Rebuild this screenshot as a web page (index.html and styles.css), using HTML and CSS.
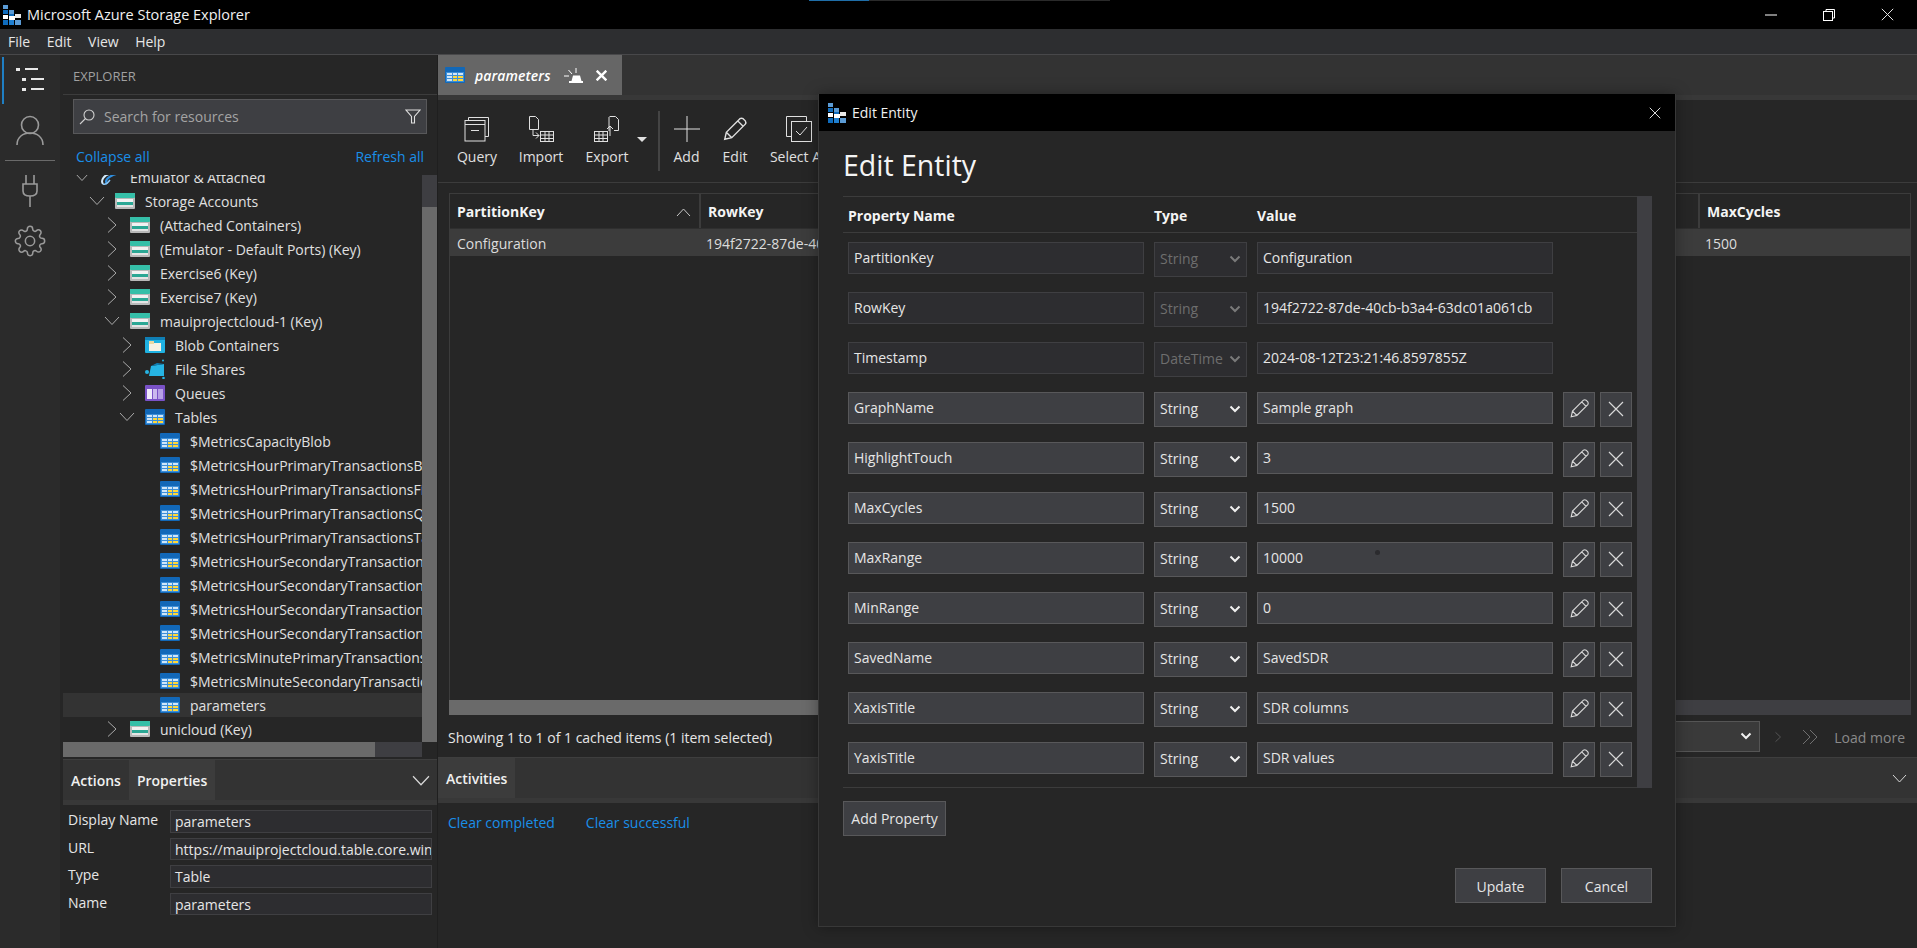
FILE: index.html
```html
<!DOCTYPE html>
<html lang="en">
<head>
    <meta charset="UTF-8">
    <title>Microsoft Azure Storage Explorer</title>
    <link rel="stylesheet" href="styles.css">
</head>
<body>

<!-- shared icons -->
<svg class="defs" width="0" height="0">
    <symbol id="logo" viewBox="0 0 18 20">
        <rect x="0" y="0" width="5" height="4" fill="#5b9bd5"/>
        <rect x="0" y="5" width="5" height="4" fill="#0f6cbd"/>
        <rect x="6" y="5" width="5" height="4" fill="#5b9bd5"/>
        <rect x="12" y="9" width="6" height="4" fill="#e8e8e8"/>
        <rect x="6" y="9" width="5" height="4" fill="#0f6cbd"/>
        <rect x="0" y="10" width="5" height="4" fill="#ffffff"/>
        <rect x="6" y="11" width="6" height="4" fill="#ffffff"/>
        <rect x="0" y="15" width="5" height="5" fill="#0f6cbd"/>
        <rect x="6" y="15" width="5" height="5" fill="#1f7fd0"/>
        <rect x="12" y="15" width="6" height="5" fill="#5b9bd5"/>
    </symbol>
    <symbol id="tbl" viewBox="0 0 20 16">
        <rect width="20" height="16" rx="1" fill="#1268b8"/>
        <rect x="1" y="5" width="18" height="10" fill="#3d8fd8"/>
        <rect x="2" y="6" width="5" height="2" fill="#cfe6f9"/>
        <rect x="8" y="6" width="4" height="2" fill="#cfe6f9"/>
        <rect x="13" y="6" width="5" height="2" fill="#cfe6f9"/>
        <rect x="2" y="9" width="5" height="2" fill="#cfe6f9"/>
        <rect x="8" y="9" width="4" height="2" fill="#ffd83a"/>
        <rect x="13" y="9" width="5" height="2" fill="#ffd83a"/>
        <rect x="2" y="12" width="5" height="2" fill="#cfe6f9"/>
        <rect x="8" y="12" width="4" height="2" fill="#ffd83a"/>
        <rect x="13" y="12" width="5" height="2" fill="#ffd83a"/>
    </symbol>
    <symbol id="acct" viewBox="0 0 20 16">
        <rect width="20" height="16" rx="1" fill="#b9b9b9"/>
        <rect width="20" height="5" rx="1" fill="#35bfa8"/>
        <rect x="2" y="6" width="16" height="3" fill="#f2f2f2"/>
        <rect x="2" y="9" width="16" height="3" fill="#2ba794"/>
        <rect x="2" y="12" width="16" height="2" fill="#e4e4e4"/>
    </symbol>
    <symbol id="blob" viewBox="0 0 20 16">
        <rect width="20" height="16" rx="1" fill="#1fb2e2"/>
        <rect width="20" height="3" fill="#0f7fb5"/>
        <rect x="4" y="6" width="12" height="8" fill="#f6f2e4"/>
        <rect x="4" y="4" width="5" height="3" fill="#e9d9a4"/>
    </symbol>
    <symbol id="share" viewBox="0 0 20 20">
        <path d="M6 7 L19 5 V17 H4z" fill="#26b4e4"/>
        <path d="M6 7 L12 4 L19 5z" fill="#0f7fb5"/>
        <circle cx="2" cy="13" r="2" fill="#26b4e4"/>
        <circle cx="18" cy="1.500" r="1" fill="#26b4e4"/>
        <circle cx="18.500" cy="19" r="1.300" fill="#26b4e4"/>
    </symbol>
    <symbol id="queue" viewBox="0 0 20 16">
        <rect width="20" height="16" rx="1" fill="#7a52c7"/>
        <rect x="2" y="4" width="5" height="10" fill="#efe9fb"/>
        <rect x="8" y="4" width="4" height="10" fill="#cbb9ee"/>
        <rect x="13" y="4" width="5" height="10" fill="#b7a0e6"/>
    </symbol>
    <symbol id="clip" viewBox="0 0 20 16">
        <path d="M3 15 C0 11 5 6 9 5 L18 1" fill="none" stroke="#d5ebfc" stroke-width="2"/>
        <path d="M7 15 C4 11 9 8 13 6 L19 4" fill="none" stroke="#2f8fe0" stroke-width="2.200"/>
        <path d="M3 15 C5 16 7 15 10 11" fill="none" stroke="#8cc6f3" stroke-width="1.500"/>
    </symbol>
    <symbol id="chev-r" viewBox="0 0 16 16">
        <path d="M4 0.500 L12 8 L4 15.500" fill="none" stroke="currentColor"/>
    </symbol>
    <symbol id="chev-d" viewBox="0 0 16 16">
        <path d="M1 4 L8 11.500 L15 4" fill="none" stroke="currentColor"/>
    </symbol>
    <symbol id="chev-wide" viewBox="0 0 15 9">
        <path d="M1 1 L7.500 8 L14 1" fill="none" stroke="currentColor"/>
    </symbol>
    <symbol id="pencil" viewBox="0 0 24 24">
        <path d="M2.500 21.500 L4 15 L16.500 2.500 Q18 1.500 19.500 2.500 L21.500 4.500 Q22.500 6 21.500 7.500 L9 20z M4 15 L9 20 M14.500 4.500 L19.500 9.500" fill="none" stroke="currentColor" stroke-width="1.300"/>
    </symbol>
    <symbol id="cross" viewBox="0 0 16 16">
        <path d="M1 1 L15 15 M15 1 L1 15" fill="none" stroke="currentColor" stroke-width="1.200"/>
    </symbol>
    <symbol id="caret" viewBox="0 0 12 8">
        <path d="M1.500 1.500 L6 6 L10.500 1.500" fill="none" stroke="currentColor" stroke-width="2"/>
    </symbol>
</svg>

<header class="titlebar">
    <svg class="app-logo"><use href="#logo"/></svg>
    <span class="app-title">Microsoft Azure Storage Explorer</span>
    <div class="progress"><div class="progress-fill"></div></div>
    <div class="win-btns">
        <span class="win-btn"><svg width="12" height="12" viewBox="0 0 12 12"><path d="M0 6 H12" stroke="#fff"/></svg></span>
        <span class="win-btn"><svg width="12" height="12" viewBox="0 0 12 12"><rect x="0.500" y="2.500" width="9" height="9" fill="none" stroke="#fff"/><path d="M3 2.500 V0.500 H11.500 V9 H9.500" fill="none" stroke="#fff"/></svg></span>
        <span class="win-btn"><svg width="13" height="13"><use href="#cross"/></svg></span>
    </div>
</header>

<nav class="menubar">
    <span>File</span>
    <span>Edit</span>
    <span>View</span>
    <span>Help</span>
</nav>

<div class="workspace">
    <aside class="rail">
        <div class="rail-item active">
            <svg width="28" height="26" viewBox="0 0 28 26" fill="#e8e8e8">
                <rect x="0" y="1" width="4" height="3"/><rect x="9" y="1" width="13" height="2"/>
                <rect x="6" y="11" width="4" height="3"/><rect x="15" y="11" width="13" height="2"/>
                <rect x="6" y="21" width="4" height="3"/><rect x="15" y="21" width="13" height="2"/>
            </svg>
        </div>
        <div class="rail-item person">
            <svg width="28" height="31" viewBox="0 0 28 31" fill="none" stroke="#9a9a9a" stroke-width="1.600">
                <circle cx="14" cy="10" r="8.500"/>
                <path d="M1 30 C1 22 7 18 14 18 C21 18 27 22 27 30"/>
            </svg>
        </div>
        <div class="rail-sep"></div>
        <div class="rail-item plug">
            <svg width="16" height="32" viewBox="0 0 16 32" fill="none" stroke="#9a9a9a" stroke-width="1.600">
                <path d="M4 0 V9 M12 0 V9 M1 9 H15 V16 Q15 21 8 21 Q1 21 1 16z M8 21 V32"/>
            </svg>
        </div>
        <div class="rail-item gear">
            <svg width="32" height="32" viewBox="0 0 24 24" fill="none" stroke="#9a9a9a" stroke-width="1.150">
                <circle cx="12" cy="12" r="3.500"/>
                <path d="M19.400 15a1.650 1.650 0 0 0 .33 1.820l.06.06a2 2 0 0 1 0 2.830 2 2 0 0 1-2.830 0l-.06-.06a1.650 1.650 0 0 0-1.820-.33 1.650 1.650 0 0 0-1 1.510V21a2 2 0 0 1-2 2 2 2 0 0 1-2-2v-.09A1.650 1.650 0 0 0 9 19.400a1.650 1.650 0 0 0-1.820.33l-.06.06a2 2 0 0 1-2.830 0 2 2 0 0 1 0-2.830l.06-.06a1.650 1.650 0 0 0 .33-1.820 1.650 1.650 0 0 0-1.510-1H3a2 2 0 0 1-2-2 2 2 0 0 1 2-2h.09A1.650 1.650 0 0 0 4.600 9a1.650 1.650 0 0 0-.33-1.820l-.06-.06a2 2 0 0 1 0-2.830 2 2 0 0 1 2.830 0l.06.06a1.650 1.650 0 0 0 1.820.33H9a1.650 1.650 0 0 0 1-1.510V3a2 2 0 0 1 2-2 2 2 0 0 1 2 2v.09a1.650 1.650 0 0 0 1 1.510 1.650 1.650 0 0 0 1.820-.33l.06-.06a2 2 0 0 1 2.830 0 2 2 0 0 1 0 2.830l-.06.06a1.650 1.650 0 0 0-.33 1.820V9a1.650 1.650 0 0 0 1.510 1H21a2 2 0 0 1 2 2 2 2 0 0 1-2 2h-.09a1.650 1.650 0 0 0-1.510 1z"/>
            </svg>
        </div>
    </aside>

    <section class="sidebar">
        <div class="side-head">EXPLORER</div>
        <div class="search">
            <svg width="16" height="16" viewBox="0 0 16 16" fill="none" stroke="#d0d0d0" stroke-width="1.100"><circle cx="10" cy="6" r="5"/><path d="M6.500 9.500 L1 15"/></svg>
            <span class="search-text">Search for resources</span>
            <svg width="16" height="15" viewBox="0 0 16 15" fill="none" stroke="#e0e0e0" stroke-width="1.100"><path d="M1 1 H15 L9.500 7.500 V14 H6.500 V7.500z"/></svg>
        </div>
        <div class="side-links">
            <a class="link">Collapse all</a>
            <a class="link">Refresh all</a>
        </div>
        <div class="tree-wrap">
            <div class="tree">
                <div class="tree-list">
                    <div class="row l0"><svg class="chev"><use href="#chev-d"/></svg><svg class="node"><use href="#clip"/></svg><span>Emulator &amp; Attached</span></div>
                    <div class="row l1"><svg class="chev"><use href="#chev-d"/></svg><svg class="node"><use href="#acct"/></svg><span>Storage Accounts</span></div>
                    <div class="row l2"><svg class="chev"><use href="#chev-r"/></svg><svg class="node"><use href="#acct"/></svg><span>(Attached Containers)</span></div>
                    <div class="row l2"><svg class="chev"><use href="#chev-r"/></svg><svg class="node"><use href="#acct"/></svg><span>(Emulator - Default Ports) (Key)</span></div>
                    <div class="row l2"><svg class="chev"><use href="#chev-r"/></svg><svg class="node"><use href="#acct"/></svg><span>Exercise6 (Key)</span></div>
                    <div class="row l2"><svg class="chev"><use href="#chev-r"/></svg><svg class="node"><use href="#acct"/></svg><span>Exercise7 (Key)</span></div>
                    <div class="row l2"><svg class="chev"><use href="#chev-d"/></svg><svg class="node"><use href="#acct"/></svg><span>mauiprojectcloud-1 (Key)</span></div>
                    <div class="row l3"><svg class="chev"><use href="#chev-r"/></svg><svg class="node"><use href="#blob"/></svg><span>Blob Containers</span></div>
                    <div class="row l3"><svg class="chev"><use href="#chev-r"/></svg><svg class="node share-node"><use href="#share"/></svg><span>File Shares</span></div>
                    <div class="row l3"><svg class="chev"><use href="#chev-r"/></svg><svg class="node"><use href="#queue"/></svg><span>Queues</span></div>
                    <div class="row l3"><svg class="chev"><use href="#chev-d"/></svg><svg class="node"><use href="#tbl"/></svg><span>Tables</span></div>
                    <div class="row l4"><i class="chev"></i><svg class="node"><use href="#tbl"/></svg><span>$MetricsCapacityBlob</span></div>
                    <div class="row l4"><i class="chev"></i><svg class="node"><use href="#tbl"/></svg><span>$MetricsHourPrimaryTransactionsBlob</span></div>
                    <div class="row l4"><i class="chev"></i><svg class="node"><use href="#tbl"/></svg><span>$MetricsHourPrimaryTransactionsFile</span></div>
                    <div class="row l4"><i class="chev"></i><svg class="node"><use href="#tbl"/></svg><span>$MetricsHourPrimaryTransactionsQueue</span></div>
                    <div class="row l4"><i class="chev"></i><svg class="node"><use href="#tbl"/></svg><span>$MetricsHourPrimaryTransactionsTable</span></div>
                    <div class="row l4"><i class="chev"></i><svg class="node"><use href="#tbl"/></svg><span>$MetricsHourSecondaryTransactionsBlob</span></div>
                    <div class="row l4"><i class="chev"></i><svg class="node"><use href="#tbl"/></svg><span>$MetricsHourSecondaryTransactionsFile</span></div>
                    <div class="row l4"><i class="chev"></i><svg class="node"><use href="#tbl"/></svg><span>$MetricsHourSecondaryTransactionsQueue</span></div>
                    <div class="row l4"><i class="chev"></i><svg class="node"><use href="#tbl"/></svg><span>$MetricsHourSecondaryTransactionsTable</span></div>
                    <div class="row l4"><i class="chev"></i><svg class="node"><use href="#tbl"/></svg><span>$MetricsMinutePrimaryTransactionsBlob</span></div>
                    <div class="row l4"><i class="chev"></i><svg class="node"><use href="#tbl"/></svg><span>$MetricsMinuteSecondaryTransactionsBlob</span></div>
                    <div class="row l4 selected"><i class="chev"></i><svg class="node"><use href="#tbl"/></svg><span>parameters</span></div>
                    <div class="row l2"><svg class="chev"><use href="#chev-r"/></svg><svg class="node"><use href="#acct"/></svg><span>unicloud (Key)</span></div>
                </div>
            </div>
            <div class="tree-scroll"><div class="tree-thumb"></div></div>
        </div>
        <div class="hscroll"><div class="hscroll-thumb"></div></div>

        <div class="side-panel">
            <div class="panel-tabs">
                <span class="panel-tab">Actions</span>
                <span class="panel-tab on">Properties</span>
                <svg class="panel-chev"><use href="#chev-wide"/></svg>
            </div>
            <div class="panel-strip"></div>
            <div class="props">
                <div class="prop"><span>Display Name</span><div class="prop-val">parameters</div></div>
                <div class="prop"><span>URL</span><div class="prop-val">https://mauiprojectcloud.table.core.windows.net/parameters</div></div>
                <div class="prop"><span>Type</span><div class="prop-val">Table</div></div>
                <div class="prop"><span>Name</span><div class="prop-val">parameters</div></div>
            </div>
        </div>
    </section>

    <main class="main">
        <div class="doc-tabs">
            <div class="doc-tab">
                <svg class="node"><use href="#tbl"/></svg>
                <span class="doc-name">parameters</span>
                <svg width="19" height="15" viewBox="0 0 19 15"><path d="M5 15 H19 V13 H17.500 L16 7.500 H9 L7.500 13 H5z" fill="#fff"/><path d="M0 8 H5 M4.500 2 L8 6 M12 0 V5" stroke="#fff"/></svg>
                <svg class="doc-close" width="11" height="11" viewBox="0 0 16 16"><path d="M1 1 L15 15 M15 1 L1 15" stroke="#fff" stroke-width="3.500"/></svg>
            </div>
        </div>
        <div class="doc-strip"></div>

        <div class="toolbar">
            <div class="tool t-query">
                <svg width="26" height="26" viewBox="0 0 26 26" fill="none" stroke="#e0e0e0"><path d="M4.500 4.500 V1.500 H24.500 V20.500 H21"/><rect x="1" y="4.500" width="20" height="20.500"/><path d="M1 8.500 H21 M7 14.500 H15" /></svg>
                <span>Query</span>
            </div>
            <div class="tool t-import">
                <svg width="26" height="26" viewBox="0 0 26 26" fill="none" stroke="#e0e0e0"><path d="M1.500 0.500 H7.500 L10.500 3.500 V13.500 H1.500z"/><path d="M5 13.500 V19.500 H11 M8 16.500 L11 19.500 L8 22.500"/><rect x="12.500" y="15.500" width="13" height="10"/><path d="M12.500 19 H25.500 M12.500 22.500 H25.500 M17 15.500 V25.500 M21 15.500 V25.500"/></svg>
                <span>Import</span>
            </div>
            <div class="tool t-export">
                <svg width="26" height="26" viewBox="0 0 26 26" fill="none" stroke="#e0e0e0"><rect x="0.500" y="15.500" width="13" height="10"/><path d="M0.500 19 H13.500 M0.500 22.500 H13.500 M5 15.500 V25.500 M9 15.500 V25.500"/><path d="M15.500 0.500 H21.500 L24.500 3.500 V14.500 H20"/><path d="M16 20 V10 M13 13 L16 10 L19 13 M15 15 V1"/></svg>
                <span>Export</span>
            </div>
            <i class="tool-caret"></i>
            <div class="tool-sep"></div>
            <div class="tool t-add">
                <svg width="26" height="26" viewBox="0 0 26 26" stroke="#e0e0e0"><path d="M13 0 V26 M0 13 H26"/></svg>
                <span>Add</span>
            </div>
            <div class="tool t-edit">
                <svg width="26" height="26" class="tool-pencil"><use href="#pencil"/></svg>
                <span>Edit</span>
            </div>
            <div class="tool t-select">
                <svg width="26" height="26" viewBox="0 0 26 26" fill="none" stroke="#e0e0e0"><path d="M5.500 20.500 H0.500 V0.500 H20.500 V5.500"/><rect x="5.500" y="5.500" width="20" height="20"/><path d="M10 15 L14 19 L21 11"/></svg>
                <span>Select All</span>
            </div>
        </div>

        <div class="grid">
            <div class="grid-head">
                <div class="gh col-a">PartitionKey<svg class="sort" width="15" height="9"><use href="#chev-wide"/></svg></div>
                <div class="gh col-b">RowKey</div>
                <div class="gh col-c">MaxCycles</div>
            </div>
            <div class="grid-row">
                <div class="gc col-a">Configuration</div>
                <div class="gc col-b">194f2722-87de-40cb-b3a4-63dc01a061cb</div>
                <div class="gc col-c">1500</div>
            </div>
        </div>
        <div class="grid-scroll"><div class="grid-thumb"></div></div>

        <div class="status">
            <span>Showing 1 to 1 of 1 cached items (1 item selected)</span>
            <div class="pager">
                <div class="pager-select"><svg class="caret"><use href="#caret"/></svg></div>
                <svg class="pager-next" width="10" height="16"><use href="#chev-r"/></svg>
                <svg class="pager-last" width="17" height="16" viewBox="0 0 17 16" fill="none" stroke="currentColor"><path d="M1 1 L8 8 L1 15 M8 1 L15 8 L8 15"/></svg>
                <span class="pager-more">Load more</span>
            </div>
        </div>

        <div class="activity">
            <div class="panel-tabs act-tabs">
                <span class="panel-tab on">Activities</span>
                <svg class="panel-chev act-chev"><use href="#chev-wide"/></svg>
            </div>
            <div class="panel-strip"></div>
            <div class="act-links">
                <a class="link">Clear completed</a>
                <a class="link">Clear successful</a>
            </div>
        </div>
    </main>
</div>

<div class="dialog">
    <div class="dlg-bar">
        <svg class="dlg-logo"><use href="#logo"/></svg>
        <span>Edit Entity</span>
        <svg class="dlg-close" width="12" height="12"><use href="#cross"/></svg>
    </div>
    <div class="dlg-body">
        <h1>Edit Entity</h1>
        <div class="ent">
            <div class="ent-list">
                <div class="ent-head">
                    <span class="c-name">Property Name</span>
                    <span class="c-type">Type</span>
                    <span>Value</span>
                </div>
                <div class="ent-rows">
                    <div class="ent-row off"><div class="fld c-name">PartitionKey</div><div class="sel c-type">String<svg class="caret"><use href="#caret"/></svg></div><div class="fld c-val">Configuration</div></div>
                    <div class="ent-row off"><div class="fld c-name">RowKey</div><div class="sel c-type">String<svg class="caret"><use href="#caret"/></svg></div><div class="fld c-val">194f2722-87de-40cb-b3a4-63dc01a061cb</div></div>
                    <div class="ent-row off"><div class="fld c-name">Timestamp</div><div class="sel c-type">DateTime<svg class="caret"><use href="#caret"/></svg></div><div class="fld c-val">2024-08-12T23:21:46.8597855Z</div></div>
                    <div class="ent-row"><div class="fld c-name">GraphName</div><div class="sel c-type">String<svg class="caret"><use href="#caret"/></svg></div><div class="fld c-val">Sample graph</div><span class="sq"><svg class="sq-pen"><use href="#pencil"/></svg></span><span class="sq"><svg class="sq-x"><use href="#cross"/></svg></span></div>
                    <div class="ent-row"><div class="fld c-name">HighlightTouch</div><div class="sel c-type">String<svg class="caret"><use href="#caret"/></svg></div><div class="fld c-val">3</div><span class="sq"><svg class="sq-pen"><use href="#pencil"/></svg></span><span class="sq"><svg class="sq-x"><use href="#cross"/></svg></span></div>
                    <div class="ent-row"><div class="fld c-name">MaxCycles</div><div class="sel c-type">String<svg class="caret"><use href="#caret"/></svg></div><div class="fld c-val">1500</div><span class="sq"><svg class="sq-pen"><use href="#pencil"/></svg></span><span class="sq"><svg class="sq-x"><use href="#cross"/></svg></span></div>
                    <div class="ent-row"><div class="fld c-name">MaxRange</div><div class="sel c-type">String<svg class="caret"><use href="#caret"/></svg></div><div class="fld c-val">10000<i class="speck"></i></div><span class="sq"><svg class="sq-pen"><use href="#pencil"/></svg></span><span class="sq"><svg class="sq-x"><use href="#cross"/></svg></span></div>
                    <div class="ent-row"><div class="fld c-name">MinRange</div><div class="sel c-type">String<svg class="caret"><use href="#caret"/></svg></div><div class="fld c-val">0</div><span class="sq"><svg class="sq-pen"><use href="#pencil"/></svg></span><span class="sq"><svg class="sq-x"><use href="#cross"/></svg></span></div>
                    <div class="ent-row"><div class="fld c-name">SavedName</div><div class="sel c-type">String<svg class="caret"><use href="#caret"/></svg></div><div class="fld c-val">SavedSDR</div><span class="sq"><svg class="sq-pen"><use href="#pencil"/></svg></span><span class="sq"><svg class="sq-x"><use href="#cross"/></svg></span></div>
                    <div class="ent-row"><div class="fld c-name">XaxisTitle</div><div class="sel c-type">String<svg class="caret"><use href="#caret"/></svg></div><div class="fld c-val">SDR columns</div><span class="sq"><svg class="sq-pen"><use href="#pencil"/></svg></span><span class="sq"><svg class="sq-x"><use href="#cross"/></svg></span></div>
                    <div class="ent-row"><div class="fld c-name">YaxisTitle</div><div class="sel c-type">String<svg class="caret"><use href="#caret"/></svg></div><div class="fld c-val">SDR values</div><span class="sq"><svg class="sq-pen"><use href="#pencil"/></svg></span><span class="sq"><svg class="sq-x"><use href="#cross"/></svg></span></div>
                </div>
            </div>
            <div class="ent-scroll"></div>
        </div>
        <button class="btn add-prop">Add Property</button>
        <div class="dlg-foot">
            <button class="btn">Update</button>
            <button class="btn">Cancel</button>
        </div>
    </div>
</div>

</body>
</html>
```

FILE: styles.css
```css
* {
    box-sizing: border-box;
}
html, body {
    height: 100%;
}
body {
    margin: 0;
    background-color: #262626;
    color: #e6e6e6;
    font-family: "Open Sans", "Noto Sans", sans-serif;
    font-size: 14px;
    overflow: hidden;
    display: flex;
    flex-direction: column;
}
svg {
    display: block;
    flex: none;
}
.defs {
    position: absolute;
}

/* title + menu */
.titlebar {
    height: 29px;
    background-color: #000;
    display: flex;
    align-items: center;
    padding-left: 3px;
    position: relative;
}
.app-logo {
    width: 18px;
    height: 20px;
}
.app-title {
    margin-left: 6px;
    font-size: 14.5px;
    color: #f0f0f0;
}
.progress {
    position: absolute;
    top: 0;
    left: 809px;
    width: 301px;
    height: 1px;
    background-color: #2a2a2a;
}
.progress-fill {
    width: 60px;
    height: 1px;
    background-color: #1f6ea8;
}
.win-btns {
    margin-left: auto;
    display: flex;
}
.win-btn {
    width: 58.5px;
    height: 29px;
    display: flex;
    align-items: center;
    justify-content: center;
    color: #e8e8e8;
}
.menubar {
    height: 26px;
    background-color: #2d2e30;
    border-bottom: 1px solid #48484a;
    display: flex;
    align-items: center;
    gap: 16.5px;
    padding-left: 8px;
}

.workspace {
    flex: 1;
    display: flex;
    min-height: 0;
}

/* left icon rail */
.rail {
    width: 60px;
    background-color: #2b2b2b;
    display: flex;
    flex-direction: column;
    align-items: center;
    flex: none;
}
.rail-item {
    width: 60px;
    height: 49px;
    display: flex;
    align-items: center;
    justify-content: center;
    position: relative;
}
.rail-item.active {
    padding-top: 1px;
}
.rail-item.active::before {
    content: "";
    position: absolute;
    left: 2px;
    top: 2px;
    bottom: 0;
    width: 2px;
    background-color: #1f7fc4;
}
.rail-item.person {
    padding-top: 3px;
}
.rail-sep {
    width: 50px;
    height: 1px;
    background-color: #6a6a6a;
    margin: 7px 0 8px;
}
.rail-item.plug {
    height: 44px;
}
.rail-item.gear {
    height: 56px;
}

/* explorer */
.sidebar {
    width: 378px;
    flex: none;
    padding-left: 3px;
    border-right: 1px solid #1f1f1f;
    display: flex;
    flex-direction: column;
    min-height: 0;
}
.side-head {
    height: 40px;
    border-bottom: 1px solid #3c3c3c;
    padding-left: 10px;
    padding-top: 2px;
    display: flex;
    align-items: center;
    font-size: 13px;
    color: #a0a0a0;
}
.search {
    height: 35px;
    width: 354px;
    margin: 4px 0 0 10px;
    background-color: #3e3f43;
    border: 1px solid #58585a;
    display: flex;
    align-items: center;
    padding: 0 5px 0 5px;
    flex: none;
}
.search-text {
    margin-left: 9px;
    margin-right: auto;
    color: #a4a4a4;
}
.side-links {
    height: 41px;
    flex: none;
    padding: 3px 13px 0 13px;
    display: flex;
    align-items: center;
    justify-content: space-between;
}
.link {
    color: #1a8fe8;
}
.tree-wrap {
    height: 567px;
    flex: none;
    display: flex;
}
.tree {
    width: 359px;
    overflow: hidden;
    flex: none;
}
.tree-list {
    margin-top: -10px;
}
.row {
    height: 24px;
    display: flex;
    align-items: center;
    white-space: nowrap;
    color: #e0e0e0;
}
.row.selected {
    background-color: #333333;
}
.l0 { padding-left: 11px; }
.l1 { padding-left: 26px; }
.l2 { padding-left: 41px; }
.l3 { padding-left: 56px; }
.l4 { padding-left: 71px; }
.chev {
    width: 16px;
    height: 16px;
    color: #aaaaaa;
    flex: none;
}
.node {
    width: 20px;
    height: 16px;
    margin: 0 10px;
}
.node.share-node {
    height: 20px;
}
.tree-scroll {
    width: 15px;
    background-color: #3e3e42;
    padding-top: 32px;
}
.tree-thumb {
    height: 100%;
    background-color: #6a6a6a;
}
.hscroll {
    width: 359px;
    height: 15px;
    flex: none;
    background-color: #3e3e42;
}
.hscroll-thumb {
    width: 312px;
    height: 15px;
    background-color: #6a6a6a;
}
.side-panel {
    margin-top: 2px;
    border-top: 1px solid #3e3e3e;
    flex: 1;
}
.panel-tabs {
    height: 40px;
    background-color: #333333;
    display: flex;
    align-items: stretch;
    position: relative;
}
.panel-tab {
    display: flex;
    align-items: center;
    padding: 0 8px;
    font-weight: 600;
    color: #f0f0f0;
}
.panel-tab.on {
    background-color: #3c3c3c;
}
.panel-chev {
    position: absolute;
    right: 6px;
    top: 15px;
    width: 20px;
    height: 11px;
    color: #d8d8d8;
}
.panel-chev.act-chev {
    right: 10px;
    top: 16px;
    width: 15px;
    height: 9px;
}
.panel-strip {
    height: 5px;
    background-color: #383838;
}
.props {
    padding: 5px 5px 0 5px;
    display: flex;
    flex-direction: column;
    gap: 5px;
}
.prop {
    display: flex;
    height: 22.500px;
    align-items: flex-start;
    justify-content: space-between;
    line-height: 20px;
}
.prop-val {
    width: 262px;
    height: 22.500px;
    background-color: #2d2d30;
    border: 1px solid #3f3f42;
    padding: 0 4px;
    line-height: 21px;
    overflow: hidden;
    white-space: nowrap;
}

/* main column */
.main {
    flex: 1;
    min-width: 0;
    display: flex;
    flex-direction: column;
}
.doc-tabs {
    height: 40px;
    background-color: #333333;
    display: flex;
    flex: none;
}
.doc-tab {
    width: 184px;
    background-color: #666666;
    display: flex;
    align-items: center;
    padding-left: 7px;
}
.doc-tab .node {
    margin: 0;
}
.doc-name {
    margin: 0 13px 0 10px;
    font-style: italic;
    font-weight: 600;
    color: #fff;
    letter-spacing: 0.1px;
}
.doc-close {
    margin-left: 13px;
}
.doc-strip {
    height: 5px;
    background-color: #383838;
    flex: none;
}
.toolbar {
    height: 83px;
    flex: none;
    border-bottom: 1px solid #3c3c3c;
    padding-left: 19px;
    display: flex;
    align-items: flex-start;
    position: relative;
}
.tool {
    display: flex;
    flex-direction: column;
    align-items: center;
    padding-top: 16px;
    line-height: 20px;
    gap: 5px;
    color: #e0e0e0;
    white-space: nowrap;
}
.t-query { width: 40px; }
.t-import { width: 44px; margin-left: 22px; }
.t-export { width: 42px; margin-left: 23px; }
.tool-caret {
    width: 0;
    height: 0;
    margin: 37px 0 0 9px;
    border-left: 5px solid transparent;
    border-right: 5px solid transparent;
    border-top: 5px solid #e0e0e0;
}
.tool-sep {
    width: 2px;
    height: 60px;
    margin: 11px 0 0 11px;
    background-color: #444444;
}
.t-add { width: 27px; margin-left: 13px; }
.t-edit { width: 26px; margin-left: 22px; }
.t-select { width: 62px; margin-left: 20px; }
.tool-pencil {
    color: #e0e0e0;
}
.grid {
    margin: 10px 6px 0 11px;
    flex: 1;
    min-height: 0;
    border: 1px solid #3c3c3c;
    border-bottom: 0;
}
.grid-head {
    height: 35px;
    display: flex;
    border-bottom: 1px solid #2f2f2f;
}
.grid-row {
    height: 27px;
    display: flex;
    background-color: #3c3c3c;
}
.gh, .gc {
    display: flex;
    align-items: center;
    padding-left: 7px;
    white-space: nowrap;
    overflow: hidden;
}
.gh {
    font-weight: 700;
    color: #f4f4f4;
    position: relative;
}
.gc {
    color: #dcdcdc;
    padding-top: 2px;
}
.gh + .gh {
    border-left: 2px solid #3c3c3c;
}
.col-a { width: 249px; }
.col-b { width: 999px; }
.col-c { flex: 1; }
.sort {
    position: absolute;
    right: 8px;
    top: 14px;
    transform: scaleY(-1);
    color: #c8c8c8;
}
.grid-scroll {
    margin: 0 6px 0 11px;
    height: 15px;
    flex: none;
    background-color: #3e3e42;
}
.grid-thumb {
    width: 400px;
    height: 15px;
    background-color: #6a6a6a;
}
.status {
    height: 42px;
    flex: none;
    padding: 2px 12px 0 10px;
    display: flex;
    align-items: center;
    justify-content: space-between;
}
.pager {
    display: flex;
    align-items: center;
}
.pager-select {
    width: 215px;
    height: 31px;
    margin-top: -2px;
    background-color: #3a3a3a;
    border: 1px solid #555555;
    display: flex;
    align-items: center;
    justify-content: flex-end;
    padding-right: 7px;
}
.pager-next {
    margin-left: 13px;
    color: #707070;
}
.pager-last {
    margin-left: 19px;
    color: #707070;
}
.pager-more {
    margin-left: 15px;
    color: #8a8a8a;
}
.caret {
    width: 12px;
    height: 8px;
    color: #f0f0f0;
}
.activity {
    height: 191px;
    flex: none;
    border-top: 1px solid #3e3e3e;
}
.act-links {
    padding: 10px 10px;
    display: flex;
    gap: 31px;
}

/* edit entity dialog */
.dialog {
    position: absolute;
    left: 818px;
    top: 94px;
    width: 858px;
    height: 833px;
    background-color: #262626;
    border: 1px solid #383838;
    border-top: 0;
    box-shadow: 0 0 14px rgba(0,0,0,0.35);
}
.dlg-bar {
    height: 37px;
    background-color: #000;
    display: flex;
    align-items: center;
    padding-left: 9px;
    color: #f0f0f0;
}
.dlg-logo {
    width: 18px;
    height: 20px;
    margin-right: 6px;
}
.dlg-close {
    margin-left: auto;
    margin-right: 14px;
    color: #f0f0f0;
}
.dlg-body {
    padding: 0 23px 0 24px;
}
.dlg-body h1 {
    margin: 0;
    height: 65px;
    padding-top: 15px;
    line-height: 38px;
    font-size: 28.5px;
    font-weight: 400;
    color: #f4f4f4;
}
.ent {
    display: flex;
    border-top: 1px solid #3c3c3c;
    border-bottom: 1px solid #3c3c3c;
    height: 592px;
}
.ent-list {
    width: 794px;
    flex: none;
}
.ent-scroll {
    width: 15px;
    margin-top: -1px;
    margin-bottom: -1px;
    background-color: #3e3e42;
}
.ent-head {
    height: 36px;
    border-bottom: 1px solid #3c3c3c;
    padding: 2px 0 0 5px;
    display: flex;
    align-items: center;
    font-weight: 700;
    color: #f4f4f4;
}
.ent-head .c-name { width: 306px; }
.ent-head .c-type { width: 103px; }
.ent-rows {
    padding: 9px 0 0 5px;
}
.ent-row {
    height: 50px;
    display: flex;
    align-items: flex-start;
    gap: 10px;
}
.fld {
    height: 32px;
    background-color: #3e3f43;
    border: 1px solid #58585a;
    padding: 0 5px;
    line-height: 29px;
    white-space: nowrap;
    overflow: hidden;
    position: relative;
}
.fld.c-name, .fld.c-val { width: 296px; }
.speck {
    position: absolute;
    left: 117px;
    top: 7px;
    width: 5px;
    height: 5px;
    border-radius: 50%;
    background-color: #2b2b2e;
}
.sel {
    width: 93px;
    height: 35px;
    background-color: #3e3f43;
    border: 1px solid #58585a;
    padding: 0 5px 2px;
    display: flex;
    align-items: center;
    justify-content: space-between;
}
.off .fld {
    background-color: #2d2d30;
    border-color: #3f3f42;
}
.off .sel {
    background-color: #2d2d30;
    border-color: #3f3f42;
    color: #6e6e6e;
}
.off .caret {
    color: #7a7a7a;
}
.sq {
    width: 32px;
    height: 35px;
    padding-bottom: 2px;
    background-color: #3e3f43;
    border: 1px solid #58585a;
    display: flex;
    align-items: center;
    justify-content: center;
    color: #d8d8d8;
}
.sq + .sq {
    margin-left: -5px;
}
.sq-pen {
    width: 21px;
    height: 21px;
}
.sq-x {
    width: 16px;
    height: 16px;
}
.btn {
    height: 35px;
    background-color: #3e3f43;
    border: 1px solid #58585a;
    color: #e6e6e6;
    font-family: inherit;
    font-size: 14px;
    padding: 0;
    display: block;
}
.add-prop {
    width: 103px;
    margin-top: 13px;
}
.dlg-foot {
    margin-top: 32px;
    display: flex;
    justify-content: flex-end;
    gap: 15px;
}
.dlg-foot .btn {
    width: 91px;
    padding-top: 2px;
}
```
